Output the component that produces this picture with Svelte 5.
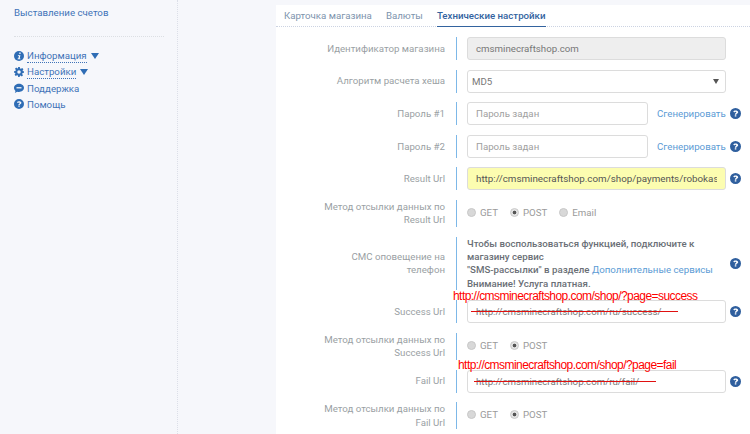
<script>
    const helpPath = 'M6 0a6 6 0 1 0 0 12A6 6 0 0 0 6 0zm.9 9.3H5.2V7.8h1.7v1.5zm1.6-3.9c-.3.4-.6.6-1 .9-.4.3-.6.5-.6 1H5.3c0-.8.3-1.2.8-1.6.4-.3.8-.5.8-1 0-.4-.4-.6-.9-.6-.6 0-1 .3-1.3.8L3.500 3.900C4 3 4.900 2.600 6 2.600c1.600 0 2.900.7 2.900 1.900 0 .3-.1.600-.4.900z';
    const menu = [
        { name: 'Информация', icon: 'info', drop: true },
        { name: 'Настройки', icon: 'gear', drop: true },
        { name: 'Поддержка', icon: 'chat', drop: false },
        { name: 'Помощь', icon: 'help', drop: false }
    ];
</script>

{#snippet help()}
    <svg class="help" width="11" height="11" viewBox="0 0 12 12"><path d={helpPath} fill="#2f5f9e" /></svg>
{/snippet}

{#snippet radio(label, checked)}
    <span class="radio-item">
        <span class="radio" class:checked></span>{label}
    </span>
{/snippet}

<div class="page">
    <aside class="sidebar">
        <a class="top-link" href="#a">Выставление счетов</a>
        <div class="divider"></div>
        <ul class="menu">
            {#each menu as item}
                <li>
                    <svg class="menu-icon" width="10" height="10" viewBox="0 0 12 12">
                        {#if item.icon === 'info'}
                            <circle cx="6" cy="6" r="6" fill="#2f6db5" />
                            <path d="M6.400 1.900h1.500v1.700H6.400zM4.700 5h3l-.9 3.900h.9v1H4.300v-1h.9l.7-2.900h-1.200z" fill="#fff" />
                        {:else if item.icon === 'gear'}
                            <path d="M5 0h2l.3 1.700 1.100.5L9.900 1.200l1.400 1.400-1 1.500.5 1.100L12 5v2l-1.700.3-.5 1.100 1 1.500-1.400 1.400-1.500-1-1.100.5L7 12H5l-.3-1.700-1.100-.5-1.500 1L.7 9.400l1-1.500-.5-1.100L0 7V5l1.700-.3.5-1.100-1-1.500L2.600.7l1.500 1 .6-.1zM6 3.900a2.100 2.100 0 1 0 0 4.200 2.100 2.100 0 0 0 0-4.200z" fill="#2f6db5" fill-rule="evenodd" />
                        {:else if item.icon === 'chat'}
                            <path d="M6 .8c3.300 0 6 2.200 6 5s-2.700 5-6 5c-.8 0-1.500-.1-2.200-.3L1 12l.8-2.400C.700 8.600 0 7.300 0 5.800 0 3 2.700.8 6 .8z" fill="#2f6db5" />
                            <path d="M3 5h6v1.500H3z" fill="#fff" />
                        {:else}
                            <path d={helpPath} fill="#2f6db5" />
                        {/if}
                    </svg>
                    <span class:dotted={item.drop}>{item.name}</span>
                    {#if item.drop}<span class="caret"></span>{/if}
                </li>
            {/each}
        </ul>
    </aside>

    <main class="main">
        <section class="card">
            <nav class="tabs">
                <span class="tab">Карточка магазина</span>
                <span class="tab">Валюты</span>
                <span class="tab active">Технические настройки</span>
            </nav>

            <div class="form">
                <div class="row">
                    <div class="label">Идентификатор магазина</div>
                    <div class="field"><div class="input disabled">cmsminecraftshop.com</div></div>
                </div>
                <div class="row">
                    <div class="label">Алгоритм расчета хеша</div>
                    <div class="field"><div class="input select">MD5<span class="select-arrow"></span></div></div>
                </div>
                <div class="row">
                    <div class="label">Пароль #1</div>
                    <div class="field">
                        <div class="input short muted">Пароль задан</div>
                        <a class="gen" href="#g">Сгенерировать</a>
                        {@render help()}
                    </div>
                </div>
                <div class="row">
                    <div class="label">Пароль #2</div>
                    <div class="field">
                        <div class="input short muted">Пароль задан</div>
                        <a class="gen" href="#g">Сгенерировать</a>
                        {@render help()}
                    </div>
                </div>
                <div class="row">
                    <div class="label">Result Url</div>
                    <div class="field">
                        <div class="input yellow"><span class="clip">http://cmsminecraftshop.com/shop/payments/robokas</span></div>
                        {@render help()}
                    </div>
                </div>
                <div class="row two">
                    <div class="label">Метод отсылки данных по<br />Result Url</div>
                    <div class="field radios">
                        {@render radio('GET', false)}
                        {@render radio('POST', true)}
                        {@render radio('Email', false)}
                    </div>
                </div>
                <div class="row sms">
                    <div class="label">СМС оповещение на<br />телефон</div>
                    <div class="field">
                        <div class="notice">
                            Чтобы воспользоваться функцией, подключите к<br />
                            магазину сервис<br />
                            "SMS-рассылки" в разделе <a href="#s">Дополнительные сервисы</a><br />
                            Внимание! Услуга платная.
                        </div>
                        {@render help()}
                    </div>
                </div>
                <div class="row">
                    <div class="label">Success Url</div>
                    <div class="field">
                        <div class="input">http://cmsminecraftshop.com/ru/success/</div>
                        {@render help()}
                    </div>
                    <span class="red-note success">http://cmsminecraftshop.com/shop/?page=success</span>
                    <span class="strike success-line"></span>
                </div>
                <div class="row two">
                    <div class="label">Метод отсылки данных по<br />Success Url</div>
                    <div class="field radios">
                        {@render radio('GET', false)}
                        {@render radio('POST', true)}
                    </div>
                </div>
                <div class="row">
                    <div class="label">Fail Url</div>
                    <div class="field">
                        <div class="input">http://cmsminecraftshop.com/ru/fail/</div>
                        {@render help()}
                    </div>
                    <span class="red-note fail">http://cmsminecraftshop.com/shop/?page=fail</span>
                    <span class="strike fail-line"></span>
                </div>
                <div class="row two">
                    <div class="label">Метод отсылки данных по<br />Fail Url</div>
                    <div class="field radios">
                        {@render radio('GET', false)}
                        {@render radio('POST', true)}
                    </div>
                </div>
            </div>
        </section>
    </main>
</div>

<style>
    :global(body) {
        margin: 0;
        background: #f6f7fb;
    }

    .page {
        display: flex;
        height: 434px;
        overflow: hidden;
        font-family: Roboto, "Noto Sans", sans-serif;
        font-size: 9.7px;
        background: #f6f7fb;
    }

    .sidebar {
        width: 178px;
        flex: none;
        padding: 6px 14px 0;
        box-sizing: border-box;
        border-right: 1px dotted #dcdfe8;
    }

    .top-link {
        display: block;
        color: #3f73b8;
        line-height: 14px;
        text-decoration: none;
    }

    .divider {
        margin: 16px 0 11px;
        width: 150px;
        border-top: 1px dotted #dcdfe3;
    }

    .menu {
        list-style: none;
        margin: 0;
        padding: 0;
        color: #3f73b8;
    }

    .menu li {
        display: flex;
        align-items: center;
        height: 16px;
    }

    .menu-icon {
        margin-right: 3px;
        flex: none;
    }

    .dotted {
        border-bottom: 1px dotted #3f73b8;
        line-height: 12px;
    }

    .caret {
        margin-left: 4px;
        border-left: 4px solid transparent;
        border-right: 4px solid transparent;
        border-top: 6px solid #2f6db5;
    }

    .main {
        flex: 1;
        padding: 5px 0 0 98px;
        min-width: 0;
    }

    .card {
        background: #fff;
        height: 100%;
    }

    .tabs {
        display: flex;
        gap: 14px;
        height: 21px;
        padding-left: 8px;
        border-bottom: 1px dotted #ccd3e2;
    }

    .tab {
        color: #7d93ad;
        line-height: 21px;
    }

    .tab.active {
        color: #33639f;
        font-weight: 500;
        height: 21px;
        border-bottom: 1px solid #33639f;
    }

    .form {
        padding-top: 10px;
    }

    .row {
        position: relative;
        display: flex;
        height: 23px;
        margin-bottom: 9.6px;
    }

    .row.two {
        height: 27px;
        margin-bottom: 10px;
    }

    .row.sms {
        height: 53px;
        margin-bottom: 10px;
    }

    .label {
        width: 169px;
        flex: none;
        align-self: center;
        text-align: right;
        color: #9a9fa4;
        line-height: 13.500px;
    }

    .field {
        display: flex;
        align-items: center;
        flex: 1;
        margin-left: 11px;
        padding-left: 10px;
        border-left: 1px solid #7db8e8;
    }

    .input {
        width: 259px;
        height: 23px;
        box-sizing: border-box;
        padding: 0 8px;
        flex: none;
        line-height: 21px;
        color: #777;
        background: #fff;
        border: 1px solid #dcdcdc;
        border-radius: 3px;
        overflow: hidden;
        white-space: nowrap;
    }

    .input.short {
        width: 181px;
    }

    .input.muted {
        color: #a0a0a0;
    }

    .input.disabled {
        background: #eeeeee;
    }

    .input.yellow {
        background: #fcfdb0;
        color: #555;
        font-size: 9.8px;
    }

    .clip {
        display: block;
        overflow: hidden;
    }

    .input.select {
        position: relative;
        padding-left: 4px;
    }

    .select-arrow {
        position: absolute;
        right: 6px;
        top: 8px;
        border-left: 3.500px solid transparent;
        border-right: 3.500px solid transparent;
        border-top: 5px solid #555;
    }

    .gen {
        margin-left: 9px;
        color: #5b9bd5;
        text-decoration: none;
    }

    .help {
        margin-left: 4px;
        flex: none;
    }

    .radios {
        gap: 12px;
        color: #9a9a9a;
        padding-bottom: 2px;
        box-sizing: border-box;
    }

    .radio-item {
        display: flex;
        align-items: center;
        gap: 5px;
    }

    .radio {
        width: 7px;
        height: 7px;
        margin-right: -1px;
        border: 1px solid #c8c8c8;
        border-radius: 50%;
        background: #d8d8d8;
        box-sizing: content-box;
    }

    .radio.checked {
        background: radial-gradient(circle, #555 0 1.500px, #e4e4e4 2.200px);
    }

    .notice {
        width: 259px;
        flex: none;
        color: #6a6f76;
        font-weight: 500;
        line-height: 13.300px;
    }

    .notice a {
        color: #5b9bd5;
        font-weight: 400;
        text-decoration: none;
    }

    .red-note {
        position: absolute;
        color: #ff0000;
        font-family: "Liberation Sans", Arial, sans-serif;
        font-size: 12px;
        letter-spacing: -0.55px;
        line-height: 15px;
        white-space: nowrap;
    }

    .red-note.success {
        left: 177px;
        top: -10.500px;
    }

    .red-note.fail {
        left: 182px;
        top: -11.500px;
    }

    .strike {
        position: absolute;
        height: 1px;
        background: #e01010;
        top: 11px;
    }

    .success-line {
        left: 195px;
        width: 207px;
    }

    .fail-line {
        left: 198px;
        width: 182px;
    }
</style>
